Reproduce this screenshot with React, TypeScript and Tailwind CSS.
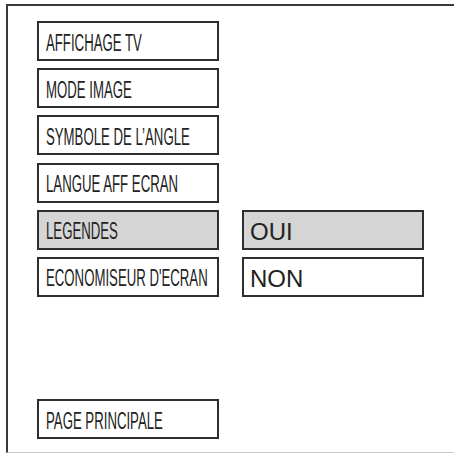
import React from "react";

type Row = { label: string; value?: string; active?: boolean };

const rows: Row[] = [
  { label: "AFFICHAGE TV" },
  { label: "MODE IMAGE" },
  { label: "SYMBOLE DE L\u2019ANGLE" },
  { label: "LANGUE AFF ECRAN" },
  { label: "LEGENDES", value: "OUI", active: true },
  { label: "ECONOMISEUR D'ECRAN", value: "NON" },
];

const font = { fontFamily: '"Liberation Sans", Arial, sans-serif' };

const MenuBox = ({ label, active }: { label: string; active?: boolean }) => (
  <div
    className={
      "w-[182px] h-[40px] border-2 border-[#2e2e2e] flex items-center pt-[4px] pl-[7px] overflow-hidden " +
      (active ? "bg-[#d5d5d5]" : "bg-white")
    }
  >
    <span className="inline-block whitespace-nowrap text-[23px] leading-none text-[#222] origin-left scale-x-[0.574]">
      {label}
    </span>
  </div>
);

const ValueBox = ({ value, active }: { value: string; active?: boolean }) => (
  <div
    className={
      "w-[182px] h-[40px] border-2 border-[#2e2e2e] flex items-center pt-[4px] pl-[6px] " +
      (active ? "bg-[#d5d5d5]" : "bg-white")
    }
  >
    <span className="text-[24px] leading-none text-[#222]">{value}</span>
  </div>
);

export default function App() {
  return (
    <div className="w-[454px] h-[454px] bg-white overflow-hidden" style={font}>
      <div className="ml-[6px] mt-[4px] h-[449px] border-t-2 border-l-2 border-b border-t-[#3a3a3a] border-l-[#3a3a3a] border-b-[#c8c8c8] flex flex-col pt-[15px] pl-[29px] pb-[13px]">
        <div className="flex flex-col gap-[7.2px]">
          {rows.map((r) => (
            <div key={r.label} className="flex gap-[23px]">
              <MenuBox label={r.label} active={r.active} />
              {r.value && <ValueBox value={r.value} active={r.active} />}
            </div>
          ))}
        </div>
        <div className="mt-auto">
          <MenuBox label="PAGE PRINCIPALE" />
        </div>
      </div>
    </div>
  );
}
